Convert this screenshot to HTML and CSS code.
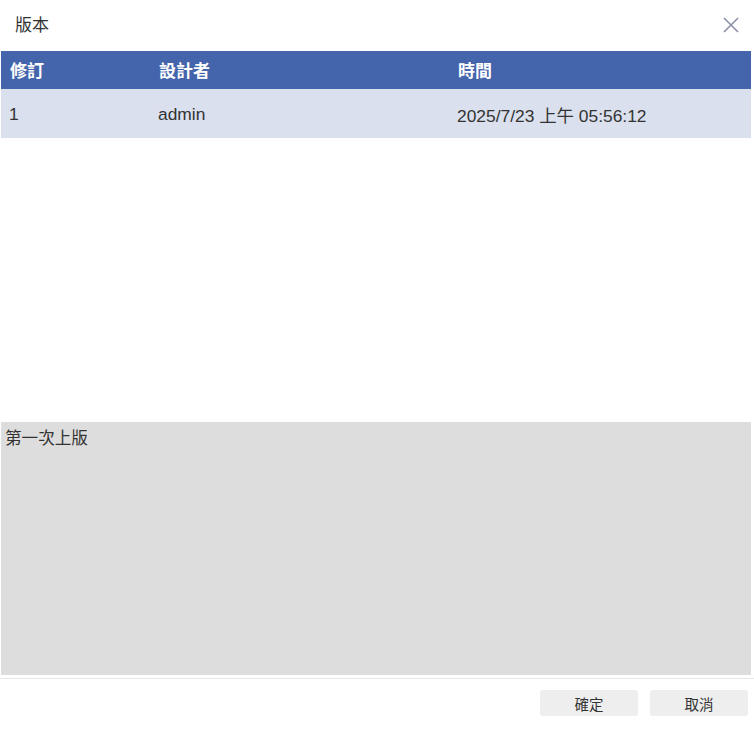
FILE: index.html
```html
<!DOCTYPE html>
<html lang="zh-Hant">
<head>
<meta charset="utf-8">
<link rel="stylesheet" href="styles.css">
</head>
<body>
<div class="dialog">
  <div class="titlebar">
    <span class="title">版本</span>
    <svg class="close" width="16" height="16" viewBox="0 0 16 16"><path d="M1 1L15 15M15 1L1 15" stroke="#8b90a8" stroke-width="1.6" fill="none"/></svg>
  </div>
  <div class="table">
    <div class="row head">
      <div class="cell">修訂</div>
      <div class="cell">設計者</div>
      <div class="cell">時間</div>
    </div>
    <div class="row body">
      <div class="cell">1</div>
      <div class="cell">admin</div>
      <div class="cell">2025/7/23 上午 05:56:12</div>
    </div>
  </div>
  <div class="spacer"></div>
  <div class="note">第一次上版</div>
  <div class="divider"></div>
  <div class="actions">
    <button class="btn">確定</button>
    <button class="btn">取消</button>
  </div>
</div>
</body>
</html>
```
FILE: styles.css
```css
html, body {
  margin: 0;
  padding: 0;
  background: #ffffff;
}
body {
  font-family: "Liberation Sans", Arial, "Noto Sans CJK TC", sans-serif;
  color: #333333;
}
.dialog {
  width: 754px;
  height: 742px;
  display: flex;
  flex-direction: column;
}
.titlebar {
  height: 51px;
  display: flex;
  align-items: center;
  justify-content: space-between;
  padding: 0 15px 5px 15px;
  box-sizing: border-box;
}
.title {
  font-size: 17px;
  color: #333;
}
.close {
  display: block;
  margin-top: 3px;
}
.table {
  margin: 0 3px 0 1px;
}
.row {
  display: grid;
  grid-template-columns: 149px 299px 1fr;
  align-items: center;
}
.cell {
  padding-left: 9px;
  font-size: 17px;
}
.head {
  height: 38px;
  background: #4464ab;
  color: #ffffff;
  font-weight: bold;
}
.head .cell {
  padding-left: 9px;
  padding-bottom: 2px;
}
.body {
  height: 49px;
  background: #dae0ed;
  color: #333;
}
.body .cell {
  padding-left: 8px;
  padding-top: 1px;
  font-size: 17.4px;
}
.spacer {
  height: 284px;
}
.note {
  margin: 0 3px 0 1px;
  height: 253px;
  background: #dddddd;
  box-sizing: border-box;
  padding: 7px 4px;
  font-size: 16.6px;
  color: #333;
  line-height: 20px;
}
.divider {
  margin-top: 3px;
  height: 1px;
  background: #e8e8e8;
}
.actions {
  display: flex;
  justify-content: flex-end;
  gap: 12px;
  padding: 11px 6px 0 0;
}
.btn {
  width: 98px;
  height: 26px;
  border: none;
  border-radius: 3px;
  background: #eeeeee;
  font-family: "Liberation Sans", Arial, "Noto Sans CJK TC", sans-serif;
  font-size: 14.5px;
  color: #333;
  padding: 0;
}
```
